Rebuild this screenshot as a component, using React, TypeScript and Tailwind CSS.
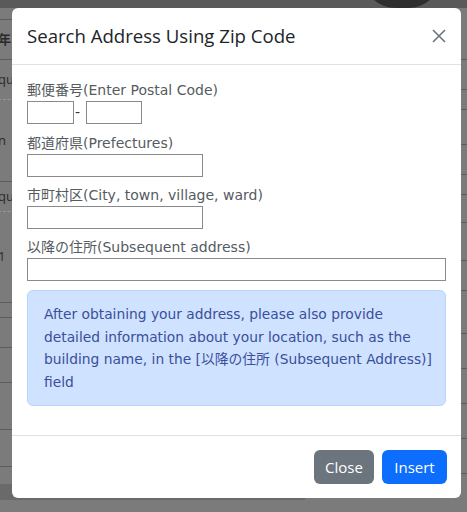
import React from 'react';

const font = { fontFamily: '"Open Sans", "Noto Sans CJK JP", sans-serif' };
const bodyFont = { fontFamily: '"DejaVu Sans", "Noto Sans CJK JP", sans-serif' };

const BackgroundPage: React.FC = () => {
  // page behind the dialog, already dimmed by the backdrop
  const rows = [
    { h: 12, text: '', dashed: false },
    { h: 40, text: '年', dashed: false, bold: true },
    { h: 40, text: 'qu', dashed: true },
    { h: 82, text: 'n', dashed: false },
    { h: 30, text: 'qu', dashed: true },
    { h: 91, text: '1', dashed: false },
    { h: 15, text: '', dashed: false },
    { h: 30, text: '', dashed: false },
    { h: 35, text: '', dashed: false },
    { h: 47, text: '', dashed: false },
    { h: 37, text: '', dashed: false },
  ];
  return (
    <div className="absolute inset-0 bg-[#7b7b7b] overflow-hidden" style={font}>
      <div className="h-2 bg-[#5a5a5a] relative">
        <div className="absolute left-[362px] -top-[60px] w-[80px] h-[68px] rounded-full bg-[#2e2e2e]" />
      </div>
      <div className="flex">
        <div className="w-[40px] flex flex-col">
          {rows.map((r, i) => (
            <div
              key={i}
              style={{ height: r.h }}
              className={`flex items-center text-[13px] text-[#2a2a2a] -ml-[2px] border-b ${r.dashed ? 'border-dashed border-[#999]' : 'border-[#5c5c5c]'} ${r.bold ? 'font-bold' : ''}`}
            >
              {r.text}
            </div>
          ))}
        </div>
        <div className="flex-1" />
        <div className="w-[20px] flex flex-col">
          {[52, 30, 20, 35, 30, 20, 28, 38, 30, 43, 35, 35, 35, 35].map((h, i) => (
            <div key={i} style={{ height: h }} className="border-b border-[#5c5c5c]" />
          ))}
        </div>
      </div>
      <div className="absolute left-0 top-[484px] w-[305px] h-[16px] bg-[#6a6a6a]" />
    </div>
  );
};

const inputCls = 'h-[23px] border border-[#8a8a8a] bg-white outline-none px-1 text-sm';

export default function App() {
  return (
    <div className="relative w-[467px] h-[512px] overflow-hidden" style={font}>
      <BackgroundPage />
      <div className="absolute left-[12px] top-[8px] w-[449px] bg-white rounded-md flex flex-col">
        {/* header */}
        <div className="h-[57px] flex items-center justify-between pl-[15px] pr-[14px] border-b border-[#dee2e6]">
          <h5 className="text-[18.6px] text-[#212529] leading-none">Search Address Using Zip Code</h5>
          <svg width="16" height="16" viewBox="0 0 16 16" className="text-[#6c757d]">
            <path d="M2 2 L14 14 M14 2 L2 14" stroke="currentColor" strokeWidth="1.6" />
          </svg>
        </div>

        {/* body */}
        <div className="pt-[15px] pb-[29px] px-[15px] flex flex-col text-[14px] text-[#555b61]" style={bodyFont}>
          <label className="leading-[21px]">郵便番号(Enter Postal Code)</label>
          <div className="flex items-center">
            <input className={`${inputCls} w-[47px]`} />
            <span className="w-[12px] pl-[1px] text-[#333]">-</span>
            <input className={`${inputCls} w-[56px]`} />
          </div>

          <label className="leading-[21px] mt-[9px]">都道府県(Prefectures)</label>
          <input className={`${inputCls} w-[176px]`} />

          <label className="leading-[21px] mt-[8px]">市町村区(City, town, village, ward)</label>
          <input className={`${inputCls} w-[176px]`} />

          <label className="leading-[21px] mt-[8px]">以降の住所(Subsequent address)</label>
          <input className={`${inputCls} w-full`} />

          <div className="mt-[9px] bg-[#cfe2ff] border border-[#b6d4fe] rounded-md pl-4 pr-1 py-3 text-[13.8px] text-[#3a4f9a] leading-[22.5px]">
            After obtaining your address, please also provide detailed information about your location, such as the building name, in the [以降の住所 (Subsequent Address)] field
          </div>
        </div>

        {/* footer */}
        <div className="border-t border-[#dee2e6] flex justify-end gap-[8px] pt-[14px] pb-[14px] pr-[14px]">
          <button className="h-[34px] w-[60px] rounded-md bg-[#6c757d] text-white text-[15px]">Close</button>
          <button className="h-[34px] w-[65px] rounded-md bg-[#0d6efd] text-white text-[15px]">Insert</button>
        </div>
      </div>
    </div>
  );
}
